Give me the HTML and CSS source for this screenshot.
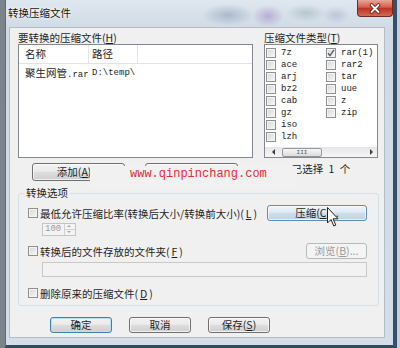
FILE: index.html
```html
<!DOCTYPE html>
<html lang="zh-CN">
<head>
  <meta charset="UTF-8">
  <title>转换压缩文件</title>
  <link rel="stylesheet" href="styles.css">
</head>
<body>
<div class="window">
  <div class="titlebar">
    <span class="title">转换压缩文件</span>
    <span class="close">
      <svg width="14" height="11" viewBox="0 0 14 11">
        <path d="M3.5 2 L10.5 9 M10.5 2 L3.5 9" stroke="#6a2018" stroke-width="3.6" stroke-linecap="round"/>
        <path d="M3.5 2 L10.5 9 M10.5 2 L3.5 9" stroke="#fff" stroke-width="1.8" stroke-linecap="round"/>
      </svg>
    </span>
  </div>

  <div class="client">
    <div class="top">
      <div class="files">
        <div class="label">要转换的压缩文件(<u>H</u>)</div>
        <div class="listview">
          <div class="lv-head">
            <span class="col-name">名称</span>
            <span class="col-path">路径</span>
            <span class="col-rest"></span>
          </div>
          <div class="lv-row">
            <span class="col-name">聚生网管<span class="mono">.rar</span></span>
            <span class="col-path mono">D:\temp\</span>
          </div>
        </div>
        <div class="under">
          <button class="btn wide">添加(<u>A</u>)...</button>
          <button class="btn wide" aria-label="删除"></button>
        </div>
      </div>

      <div class="types">
        <div class="label">压缩文件类型(<u>T</u>)</div>
        <div class="typebox">
          <div class="typegrid">
            <label class="item"><span class="cb"></span>7z</label>
            <label class="item"><span class="cb"></span>ace</label>
            <label class="item"><span class="cb"></span>arj</label>
            <label class="item"><span class="cb"></span>bz2</label>
            <label class="item"><span class="cb"></span>cab</label>
            <label class="item"><span class="cb"></span>gz</label>
            <label class="item"><span class="cb"></span>iso</label>
            <label class="item"><span class="cb"></span>lzh</label>
            <label class="item"><span class="cb on"><svg width="8" height="8" viewBox="0 0 8 8"><path d="M1 4.2 L3 6.6 L7 0.8" fill="none" stroke="#4b5f78" stroke-width="1.4"/></svg></span>rar(1)</label>
            <label class="item"><span class="cb"></span>rar2</label>
            <label class="item"><span class="cb"></span>tar</label>
            <label class="item"><span class="cb"></span>uue</label>
            <label class="item"><span class="cb"></span>z</label>
            <label class="item"><span class="cb"></span>zip</label>
          </div>
          <div class="hscroll">
            <span class="arrow left"></span>
            <span class="track"><span class="thumb">III</span></span>
            <span class="arrow right"></span>
          </div>
        </div>
        <div class="count">已选择 1 个</div>
      </div>
    </div>

    <fieldset class="group">
      <legend>转换选项</legend>
      <div class="opt-row first">
        <label class="check"><span class="cb"></span>最低允许压缩比率(转换后大小/转换前大小)(<u>L</u>)</label>
        <button class="btn hot">压缩(<u>C</u>)...</button>
      </div>
      <div class="spinner">
        <span class="spin-val">100</span>
        <span class="spin-btns"><i class="up"></i><i class="down"></i></span>
      </div>
      <div class="opt-row second">
        <label class="check"><span class="cb"></span>转换后的文件存放的文件夹(<u>F</u>)</label>
        <button class="btn browse" disabled>浏览(<u>B</u>)...</button>
      </div>
      <div class="field"></div>
      <div class="opt-row third">
        <label class="check"><span class="cb"></span>删除原来的压缩文件(<u>D</u>)</label>
      </div>
    </fieldset>

    <div class="footer">
      <button class="btn default">确定</button>
      <button class="btn">取消</button>
      <button class="btn">保存(<u>S</u>)</button>
    </div>
  </div>

  <div class="watermark">www.qinpinchang.com</div>
  <svg class="cursor" width="12" height="21" viewBox="0 0 12 21">
    <path d="M0.5 0.5 L0.5 16 L4 12.5 L6.8 19 L8.8 18.1 L6.1 11.8 L11 11.8 Z" fill="#fff" stroke="#222" stroke-width="1"/>
  </svg>
</div>
</body>
</html>
```

FILE: styles.css
```css
* {
  box-sizing: border-box;
}

body {
  margin: 0;
  width: 400px;
  height: 348px;
  overflow: hidden;
  background: linear-gradient(to right, #7b848d 0, #7b848d 5px, #c8cfd6 5px);
  font-family: "Noto Sans CJK SC", "Noto Sans", sans-serif;
  font-size: 10.5px;
  color: #1e1e1e;
}

u {
  text-decoration: underline;
}

.mono {
  font-family: "Liberation Mono", monospace;
  font-size: 9px;
}

/* window frame */
.window {
  position: relative;
  margin-left: 5px;
  width: 392px;
  height: 348px;
  border-left: 1px solid #5f6a75;
  border-right: 4px solid #34506a;
  border-bottom: 3px solid #2f4c5d;
  background:
    radial-gradient(ellipse 26px 11px at 222px 15px, rgba(118, 138, 168, 0.45), transparent),
    radial-gradient(ellipse 16px 11px at 262px 16px, rgba(150, 112, 186, 0.45), transparent),
    radial-gradient(ellipse 20px 9px at 300px 13px, rgba(116, 150, 160, 0.35), transparent),
    radial-gradient(ellipse 14px 9px at 330px 15px, rgba(140, 150, 190, 0.35), transparent),
    linear-gradient(#dfe7ef, #d0dae5 30px, #d5dee8);
}

.titlebar {
  display: flex;
  justify-content: space-between;
  align-items: flex-start;
  height: 27px;
  padding-left: 2px;
}

.title {
  margin-top: 7px;
  line-height: 12px;
  color: #111;
  text-shadow: 0 0 4px #fff, 0 0 2px #fff;
}

.close {
  display: flex;
  align-items: center;
  justify-content: center;
  width: 36px;
  height: 17px;
  border: 1px solid #6e2b22;
  border-top: none;
  border-radius: 0 0 4px 4px;
  background: linear-gradient(#eaa797, #d45c4c 45%, #bd3224 52%, #d66a52);
}

/* client area */
.client {
  margin: 0 8px 0 3px;
  height: 311px;
  padding: 4px 0 0 8px;
  background: #f0f0f0;
  border: 1px solid #b3bdc7;
}

.top {
  display: flex;
  gap: 11px;
}

.files {
  width: 235px;
}

.types {
  width: 114px;
}

.label {
  height: 12px;
  line-height: 12px;
  white-space: nowrap;
}

.listview {
  height: 114px;
  background: #fff;
  border: 1px solid #828790;
}

.lv-head {
  display: flex;
  height: 19px;
  border-bottom: 1px solid #e3e3e3;
}

.lv-head span {
  line-height: 18px;
  border-right: 1px solid #e3e3e3;
}

.lv-head .col-rest {
  flex: 1;
  border-right: none;
}

.col-name {
  width: 70px;
  padding-left: 6px;
  white-space: nowrap;
}

.col-path {
  width: 49px;
  padding-left: 3px;
  white-space: nowrap;
}

.lv-row {
  display: flex;
  height: 18px;
  line-height: 18px;
}

.under {
  display: flex;
  gap: 20px;
  margin-top: 5px;
  padding-left: 14px;
}

.typebox {
  display: flex;
  flex-direction: column;
  height: 114px;
  background: #fff;
  border: 1px solid #828790;
}

.typegrid {
  flex: 1;
  display: grid;
  grid-auto-flow: column;
  grid-template-rows: repeat(8, 12px);
  grid-template-columns: 60px 50px;
  padding: 2px 0 0 1px;
}

.item {
  display: flex;
  align-items: center;
  gap: 5px;
  font-family: "Liberation Mono", monospace;
  font-size: 9px;
  color: #222;
}

.cb {
  display: flex;
  align-items: center;
  justify-content: center;
  flex: none;
  width: 10px;
  height: 10px;
  border: 1px solid #8e8f8f;
  background: linear-gradient(135deg, #d6d6d6, #f8f8f8);
  box-shadow: inset 0 0 0 1px #f4f4f4;
}

.hscroll {
  display: flex;
  align-items: center;
  height: 10px;
  background: linear-gradient(#e6e6e6, #f5f5f5);
}

.arrow {
  width: 14px;
  height: 10px;
  position: relative;
}

.arrow::after {
  content: "";
  position: absolute;
  top: 2px;
  border: 3px solid transparent;
}

.arrow.left::after {
  left: 4px;
  border-right-color: #3c3c3c;
}

.arrow.right::after {
  left: 7px;
  border-left-color: #3c3c3c;
}

.track {
  flex: 1;
}

.thumb {
  display: block;
  width: 40px;
  height: 9px;
  margin-left: 3px;
  border: 1px solid #979797;
  border-radius: 2px;
  background: linear-gradient(#f6f6f6, #dcdcdc);
  font-family: "Liberation Mono", monospace;
  font-size: 6px;
  line-height: 7px;
  text-align: center;
  color: #555;
}

.count {
  margin-top: 5px;
  line-height: 12px;
  text-align: center;
  white-space: nowrap;
  word-spacing: 3px;
}

/* options group */
.group {
  width: 361px;
  min-width: 0;
  margin: 6px 0 0;
  padding: 0 11px 6px 9px;
  border: 1px solid #d5dfe5;
  border-radius: 3px;
}

.group legend {
  height: 12px;
  line-height: 12px;
  padding: 0 2px;
  margin-left: -4px;
}

.opt-row {
  display: flex;
  align-items: center;
  justify-content: space-between;
  height: 16px;
}

.opt-row.first {
  margin-top: 6px;
}

.opt-row.second {
  margin-top: 7px;
}

.opt-row.third {
  margin-top: 10px;
  height: 12px;
}

.check {
  display: flex;
  align-items: center;
  gap: 2px;
  white-space: nowrap;
}

.spinner {
  display: flex;
  width: 34px;
  height: 13px;
  margin: 2px 0 0 14px;
  border: 1px solid #c4c4c4;
  background: #f4f4f4;
  color: #9a9a9a;
}

.spin-val {
  flex: 1;
  padding-left: 2px;
  font-family: "Liberation Mono", monospace;
  font-size: 9px;
  line-height: 11px;
}

.spin-btns {
  display: flex;
  flex-direction: column;
  width: 11px;
  border-left: 1px solid #d2d2d2;
}

.spin-btns i {
  flex: 1;
  position: relative;
}

.spin-btns .up {
  border-bottom: 1px solid #d2d2d2;
}

.spin-btns i::after {
  content: "";
  position: absolute;
  left: 2px;
  border: 2px solid transparent;
}

.spin-btns .up::after {
  top: -1px;
  border-bottom-color: #a8a8a8;
}

.spin-btns .down::after {
  top: 1px;
  border-top-color: #a8a8a8;
}

.field {
  width: 325px;
  height: 15px;
  margin: 3px 0 0 14px;
  border: 1px solid #c8c8c8;
  background: #f2f2f2;
}

/* buttons */
.btn {
  font: inherit;
  color: inherit;
  padding: 0;
  height: 16px;
  line-height: 14px;
  border: 1px solid #707070;
  border-radius: 3px;
  background: linear-gradient(#f2f2f2, #ebebeb 45%, #dddddd 52%, #cfcfcf);
  box-shadow: inset 0 0 0 1px rgba(255, 255, 255, 0.7);
  white-space: nowrap;
}

.btn.wide {
  width: 93px;
  height: 18px;
  line-height: 16px;
}

.btn.hot {
  width: 100px;
  border-color: #5b8db5;
  background: linear-gradient(#eef5fa, #dfeaf3 45%, #cddde9 52%, #c1d3e2);
}

.btn.browse {
  width: 61px;
  border-color: #b5babd;
  background: #f4f4f4;
  color: #9a9a9a;
  box-shadow: none;
}

.footer {
  display: flex;
  gap: 17px;
  margin: 11px 0 0 32px;
}

.footer .btn {
  width: 62px;
}

.btn.default {
  border-color: #3c7fb1;
  box-shadow: inset 0 0 0 1px #b8e0f5;
}

/* overlays */
.watermark {
  position: absolute;
  left: 84px;
  top: 166px;
  width: 207px;
  height: 22px;
  padding: 1px 0 0 40px;
  background: #f1f1f1;
  font-family: "Liberation Mono", monospace;
  font-size: 12px;
  line-height: 14px;
  color: #e42d36;
}

.cursor {
  position: absolute;
  left: 321px;
  top: 207px;
}
```
